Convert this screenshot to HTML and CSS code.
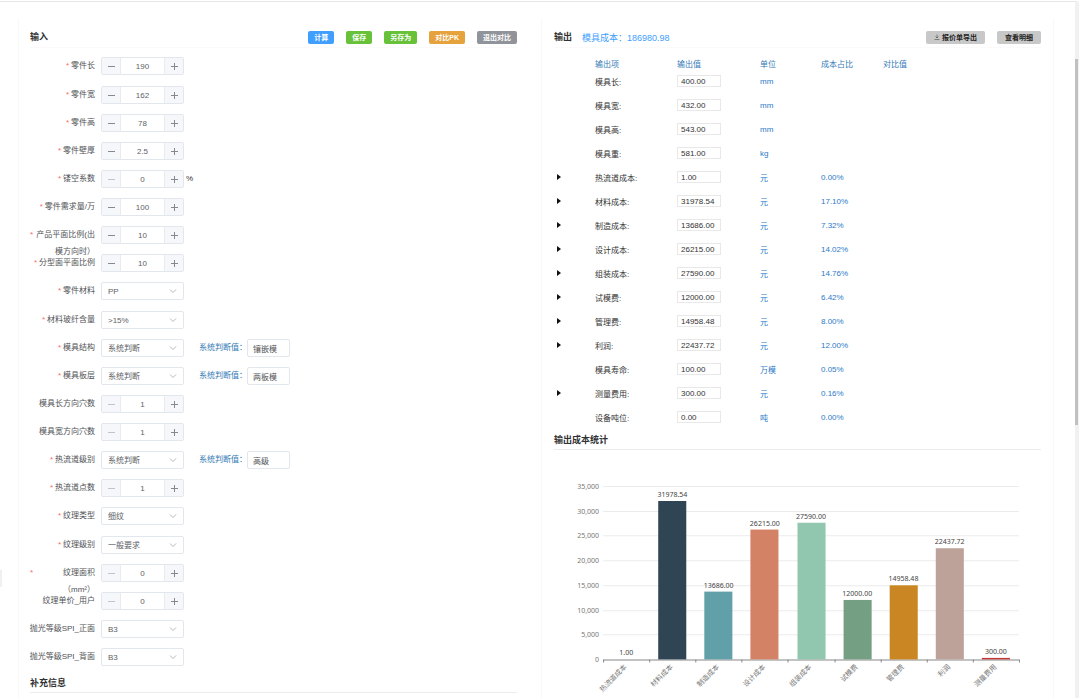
FILE: index.html
```html
<!DOCTYPE html>
<html lang="zh-CN">
<head>
    <meta charset="UTF-8">
    <meta name="viewport" content="width=device-width, initial-scale=1.0">
    <title>模具成本</title>
    <link rel="stylesheet" href="styles.css">
</head>
<body>

<div class="page">
    <span class="side-handle"></span>

    <section class="panel input-panel">
        <div class="panel-header">
            <h2>输入</h2>
            <div class="button-group">
                <button class="btn primary">计算</button>
                <button class="btn success">保存</button>
                <button class="btn success">另存为</button>
                <button class="btn warning">对比PK</button>
                <button class="btn info">退出对比</button>
            </div>
        </div>
        <form id="inputForm"></form>
        <h2 class="section-title">补充信息</h2>
    </section>

    <section class="panel output-panel">
        <div class="panel-header">
            <h2>输出</h2>
            <span class="total">模具成本：186980.98</span>
            <div class="button-group">
                <button class="btn plain">
                    <svg class="icon" viewBox="0 0 12 12"><path d="M6 1v7M3 5l3 3 3-3M1 11h10"/></svg>报价单导出
                </button>
                <button class="btn plain">查看明细</button>
            </div>
        </div>
        <table class="output-table">
            <thead>
                <tr>
                    <th class="col-arrow"></th>
                    <th class="col-name">输出项</th>
                    <th class="col-value">输出值</th>
                    <th class="col-unit">单位</th>
                    <th class="col-ratio">成本占比</th>
                    <th>对比值</th>
                </tr>
            </thead>
            <tbody id="outputRows"></tbody>
        </table>
        <h2 class="section-title">输出成本统计</h2>
        <svg class="chart" id="chart" viewBox="0 0 486 240"></svg>
    </section>

    <div class="scrollbar"><div class="scroll-thumb"></div></div>
</div>

<script>
    const formGroups = [
        [
            { label: "零件长", required: true, value: 190 }
        ],
        [
            { label: "零件宽", required: true, value: 162 },
            { label: "零件高", required: true, value: 78 },
            { label: "零件壁厚", required: true, value: 2.5 },
            { label: "镂空系数", required: true, value: 0, min: true, suffix: "%" },
            { label: "零件需求量/万", required: true, value: 100 },
            { label: "产品平面比例(出模方向时）", required: true, value: 10 },
            { label: "分型面平面比例", required: true, value: 10 },
            { label: "零件材料", required: true, option: "PP" }
        ],
        [
            { label: "材料玻纤含量", required: true, option: ">15%" },
            { label: "模具结构", required: true, option: "系统判断", system: "镶嵌模" },
            { label: "模具板层", required: true, option: "系统判断", system: "两板模" },
            { label: "模具长方向穴数", value: 1, min: true },
            { label: "模具宽方向穴数", value: 1, min: true },
            { label: "热流道级别", required: true, option: "系统判断", system: "高级" },
            { label: "热流道点数", required: true, value: 1, min: true },
            { label: "纹理类型", required: true, option: "细纹" }
        ],
        [
            { label: "纹理级别", required: true, option: "一般要求" },
            { label: "纹理面积（mm²）", required: true, value: 0, min: true },
            { label: "纹理单价_用户", value: 0, min: true },
            { label: "抛光等级SPI_正面", option: "B3" },
            { label: "抛光等级SPI_背面", option: "B3" }
        ]
    ];

    const outputData = [
        { name: "模具长", value: "400.00", unit: "mm" },
        { name: "模具宽", value: "432.00", unit: "mm" },
        { name: "模具高", value: "543.00", unit: "mm" },
        { name: "模具重", value: "581.00", unit: "kg" },
        { name: "热流道成本", value: "1.00", unit: "元", ratio: "0.00%", open: true, color: "#c23531" },
        { name: "材料成本", value: "31978.54", unit: "元", ratio: "17.10%", open: true, color: "#2f4554" },
        { name: "制造成本", value: "13686.00", unit: "元", ratio: "7.32%", open: true, color: "#61a0a8" },
        { name: "设计成本", value: "26215.00", unit: "元", ratio: "14.02%", open: true, color: "#d48265" },
        { name: "组装成本", value: "27590.00", unit: "元", ratio: "14.76%", open: true, color: "#91c7ae" },
        { name: "试模费", value: "12000.00", unit: "元", ratio: "6.42%", open: true, color: "#749f83" },
        { name: "管理费", value: "14958.48", unit: "元", ratio: "8.00%", open: true, color: "#ca8622" },
        { name: "利润", value: "22437.72", unit: "元", ratio: "12.00%", open: true, color: "#bda29a" },
        { name: "模具寿命", value: "100.00", unit: "万模", ratio: "0.05%" },
        { name: "测量费用", value: "300.00", unit: "元", ratio: "0.16%", open: true, color: "#c23531" },
        { name: "设备吨位", value: "0.00", unit: "吨", ratio: "0.00%" }
    ];

    function createControl(item, id) {
        if (item.option) {
            return `<select class="select" id="${id}"><option>${item.option}</option></select>`;
        }
        return `<div class="stepper">
            <button type="button" class="step" aria-label="减少" ${item.min ? "disabled" : ""}><svg viewBox="0 0 8 8"><path d="M1 4.5h7"/></svg></button>
            <input type="text" id="${id}" value="${item.value}">
            <button type="button" class="step" aria-label="增加"><svg viewBox="0 0 8 8"><path d="M1 4.5h7M4.5 1v7"/></svg></button>
        </div>`;
    }

    function createForm() {
        let count = 0;
        document.getElementById("inputForm").innerHTML = formGroups.map(group => {
            const rows = group.map(item => {
                const id = "field" + count++;
                let extra = "";
                if (item.suffix) extra = `<span class="suffix">${item.suffix}</span>`;
                if (item.system) {
                    extra = `<label class="system-label" for="${id}s">系统判断值：</label>
                        <input class="system-value" type="text" id="${id}s" value="${item.system}" readonly>`;
                }
                return `<div class="form-row">
                    <label class="${item.required ? "required" : "optional"}" for="${id}"><span>${item.label}</span></label>
                    ${createControl(item, id)}${extra}
                </div>`;
            });
            return `<div class="form-group">${rows.join("")}</div>`;
        }).join("");
    }

    function createOutput() {
        document.getElementById("outputRows").innerHTML = outputData.map((item, i) => `<tr>
            <td>${item.open ? '<button class="arrow" aria-label="展开"></button>' : ""}</td>
            <td><label for="out${i}">${item.name}:</label></td>
            <td><input type="text" id="out${i}" value="${item.value}"></td>
            <td class="blue">${item.unit}</td>
            <td class="blue">${item.ratio || ""}</td>
            <td></td>
        </tr>`).join("");
    }

    function createChart() {
        const left = 49, right = 464, top = 22, bottom = 195, max = 35000;
        const bars = outputData.filter(item => item.color);
        const step = (right - left) / bars.length;
        let svg = "";

        for (let v = 0; v <= max; v += 5000) {
            const y = Math.round(bottom - v / max * (bottom - top)) + 0.5;
            svg += `<line class="${v ? "grid" : "axis"}" x1="${left}" x2="${right}" y1="${y}" y2="${y}"/>`;
            svg += `<text class="tick" x="${left - 4}" y="${y + 2}">${v.toLocaleString("en-US")}</text>`;
        }
        for (let i = 0; i <= bars.length; i++) {
            const x = Math.round(left + i * step) + 0.5;
            svg += `<line class="axis" x1="${x}" x2="${x}" y1="${bottom}" y2="${bottom + 3}"/>`;
        }
        bars.forEach((item, i) => {
            const center = left + (i + 0.5) * step;
            const height = item.value / max * (bottom - top);
            svg += `<rect x="${Math.round(center - 14)}" y="${bottom - height}" width="28" height="${height}" fill="${item.color}"/>`;
            svg += `<text class="value" x="${center}" y="${bottom - height - 4}">${item.value}</text>`;
            svg += `<text class="name" transform="translate(${center + 1} ${bottom + 8}) rotate(-45)">${item.name}</text>`;
        });
        document.getElementById("chart").innerHTML = svg;
    }

    createForm();
    createOutput();
    createChart();
</script>

</body>
</html>
```

FILE: styles.css
```css
* {
    box-sizing: border-box;
}
body {
    margin: 0;
    font-family: "Liberation Sans", "Noto Sans CJK SC", sans-serif;
    font-size: 8px;
    color: #333;
    background: white;
}
button, input, select {
    font-family: inherit;
    font-size: 8px;
    margin: 0;
    padding: 0;
}
h2 {
    margin: 0;
    font-size: 9px;
    line-height: 14px;
    color: #303133;
}
.page {
    position: relative;
    display: grid;
    grid-template-columns: 523fr 513fr;
    height: calc(100vh - 1px);
    margin-top: 1px;
    margin-right: 1px;
    padding: 16px 24px 0 18px;
    border-top: 1px solid #e8e8e8;
    border-right: 1px solid #f0f0f0;
    border-top-right-radius: 3px;
    overflow: hidden;
}
.side-handle {
    position: absolute;
    left: 0;
    top: 568px;
    width: 2px;
    height: 17px;
    background: #f0f0f0;
}
.panel {
    border-left: 1px solid #f8f8f8;
}
.input-panel {
    padding: 0 24px 0 11px;
}
.output-panel {
    padding: 0 12px;
    border-right: 1px solid #f8f8f8;
}
.panel-header {
    display: flex;
    align-items: center;
    height: 30px;
    padding-top: 9px;
    border-bottom: 1px solid #fafafa;
}
.total {
    margin-left: 10px;
    font-size: 9px;
    color: #409eff;
}
.button-group {
    display: flex;
    gap: 12px;
    margin-left: auto;
}
.btn {
    display: flex;
    align-items: center;
    height: 13px;
    padding: 0 6px;
    border: none;
    border-radius: 2px;
    font-size: 7px;
    font-weight: bold;
    color: white;
    cursor: pointer;
}
.primary {
    background: #409eff;
}
.success {
    background: #67c23a;
}
.warning {
    background: #e6a23c;
}
.info {
    background: #909399;
}
.plain {
    padding: 0 8px;
    color: #222;
    background: #c8c8c8;
}
.icon {
    width: 6px;
    height: 6px;
    margin-right: 2px;
    fill: none;
    stroke: #333;
}

/* input form */
#inputForm {
    display: flex;
    flex-direction: column;
    gap: 1px;
    padding-top: 9px;
}
.form-row {
    display: flex;
    align-items: flex-start;
    height: 28px;
}
.form-row label {
    display: flex;
    justify-content: flex-end;
    width: 71px;
    padding-right: 6px;
    line-height: 17px;
    color: #505256;
    text-align: right;
}
.required::before {
    content: "*";
    margin-right: 2px;
    color: #f56c6c;
}
.optional {
    white-space: nowrap;
}
.stepper {
    display: flex;
    width: 83px;
    height: 18px;
    border: 1px solid #e2e6ed;
    border-radius: 2px;
    overflow: hidden;
}
.stepper input {
    flex: 1;
    min-width: 0;
    border: solid #e8ebf0;
    border-width: 0 1px;
    text-align: center;
    color: #606266;
}
.step {
    display: flex;
    align-items: center;
    justify-content: center;
    width: 18px;
    border: none;
    background: #f5f7fa;
}
.step svg {
    width: 8px;
    height: 8px;
    fill: none;
    stroke: #85888e;
}
.step:disabled svg {
    stroke: #c0c4cc;
}
.select {
    appearance: none;
    width: 83px;
    height: 18px;
    padding: 0 6px;
    border: 1px solid #e2e6ed;
    border-radius: 2px;
    color: #606266;
    background: white url("data:image/svg+xml,%3Csvg xmlns='http://www.w3.org/2000/svg' viewBox='0 0 8 8'%3E%3Cpath d='M1 2.5l3 3 3-3' fill='none' stroke='%23b4b8c0'/%3E%3C/svg%3E") no-repeat right 6px center / 8px 8px;
}
.suffix {
    margin-left: 2px;
    line-height: 18px;
}
.form-row .system-label {
    width: auto;
    margin-left: 15px;
    padding: 0;
    color: #337ab7;
}
.system-value {
    width: 43px;
    height: 18px;
    padding: 0 5px;
    border: 1px solid #e2e6ed;
    border-radius: 2px;
    color: #505256;
}
.section-title {
    padding-bottom: 2px;
    border-bottom: 1px solid #ececec;
}

/* output table */
.output-table {
    width: 100%;
    margin: 8px 0 2px;
    border-collapse: collapse;
    table-layout: fixed;
}
.output-table th {
    height: 15px;
    padding: 0;
    font-weight: normal;
    text-align: left;
    color: #337ab7;
}
.output-table td {
    height: 24px;
    padding: 0 0 4px;
}
.output-table input {
    display: block;
    width: 44px;
    height: 12px;
    padding: 0 3px;
    border: 1px solid #e8e8e8;
    color: #333;
}
.output-table .blue {
    color: #2a7ac8;
}
.col-arrow {
    width: 41px;
}
.col-name {
    width: 82px;
}
.col-value {
    width: 83px;
}
.col-unit {
    width: 61px;
}
.col-ratio {
    width: 62px;
}
.arrow {
    display: block;
    width: 0;
    height: 0;
    margin-left: 3px;
    border: solid transparent;
    border-width: 3px 0 3px 4px;
    border-left-color: #111;
    background: none;
}

/* cost chart */
.chart {
    display: block;
    width: 100%;
    margin-top: 14px;
    font-family: "Noto Sans", "Noto Sans CJK SC", sans-serif;
    font-size: 7px;
}
.grid {
    stroke: #ebebeb;
}
.axis {
    stroke: #888;
}
.tick {
    text-anchor: end;
    fill: #777;
}
.value {
    text-anchor: middle;
    fill: #444;
}
.name {
    text-anchor: end;
    fill: #777;
}

.scrollbar {
    position: absolute;
    top: 0;
    right: 0;
    bottom: 0;
    width: 3px;
    background: #f1f1f1;
}
.scroll-thumb {
    height: 366px;
    margin-top: 57px;
    background: #c1c1c1;
}
```
